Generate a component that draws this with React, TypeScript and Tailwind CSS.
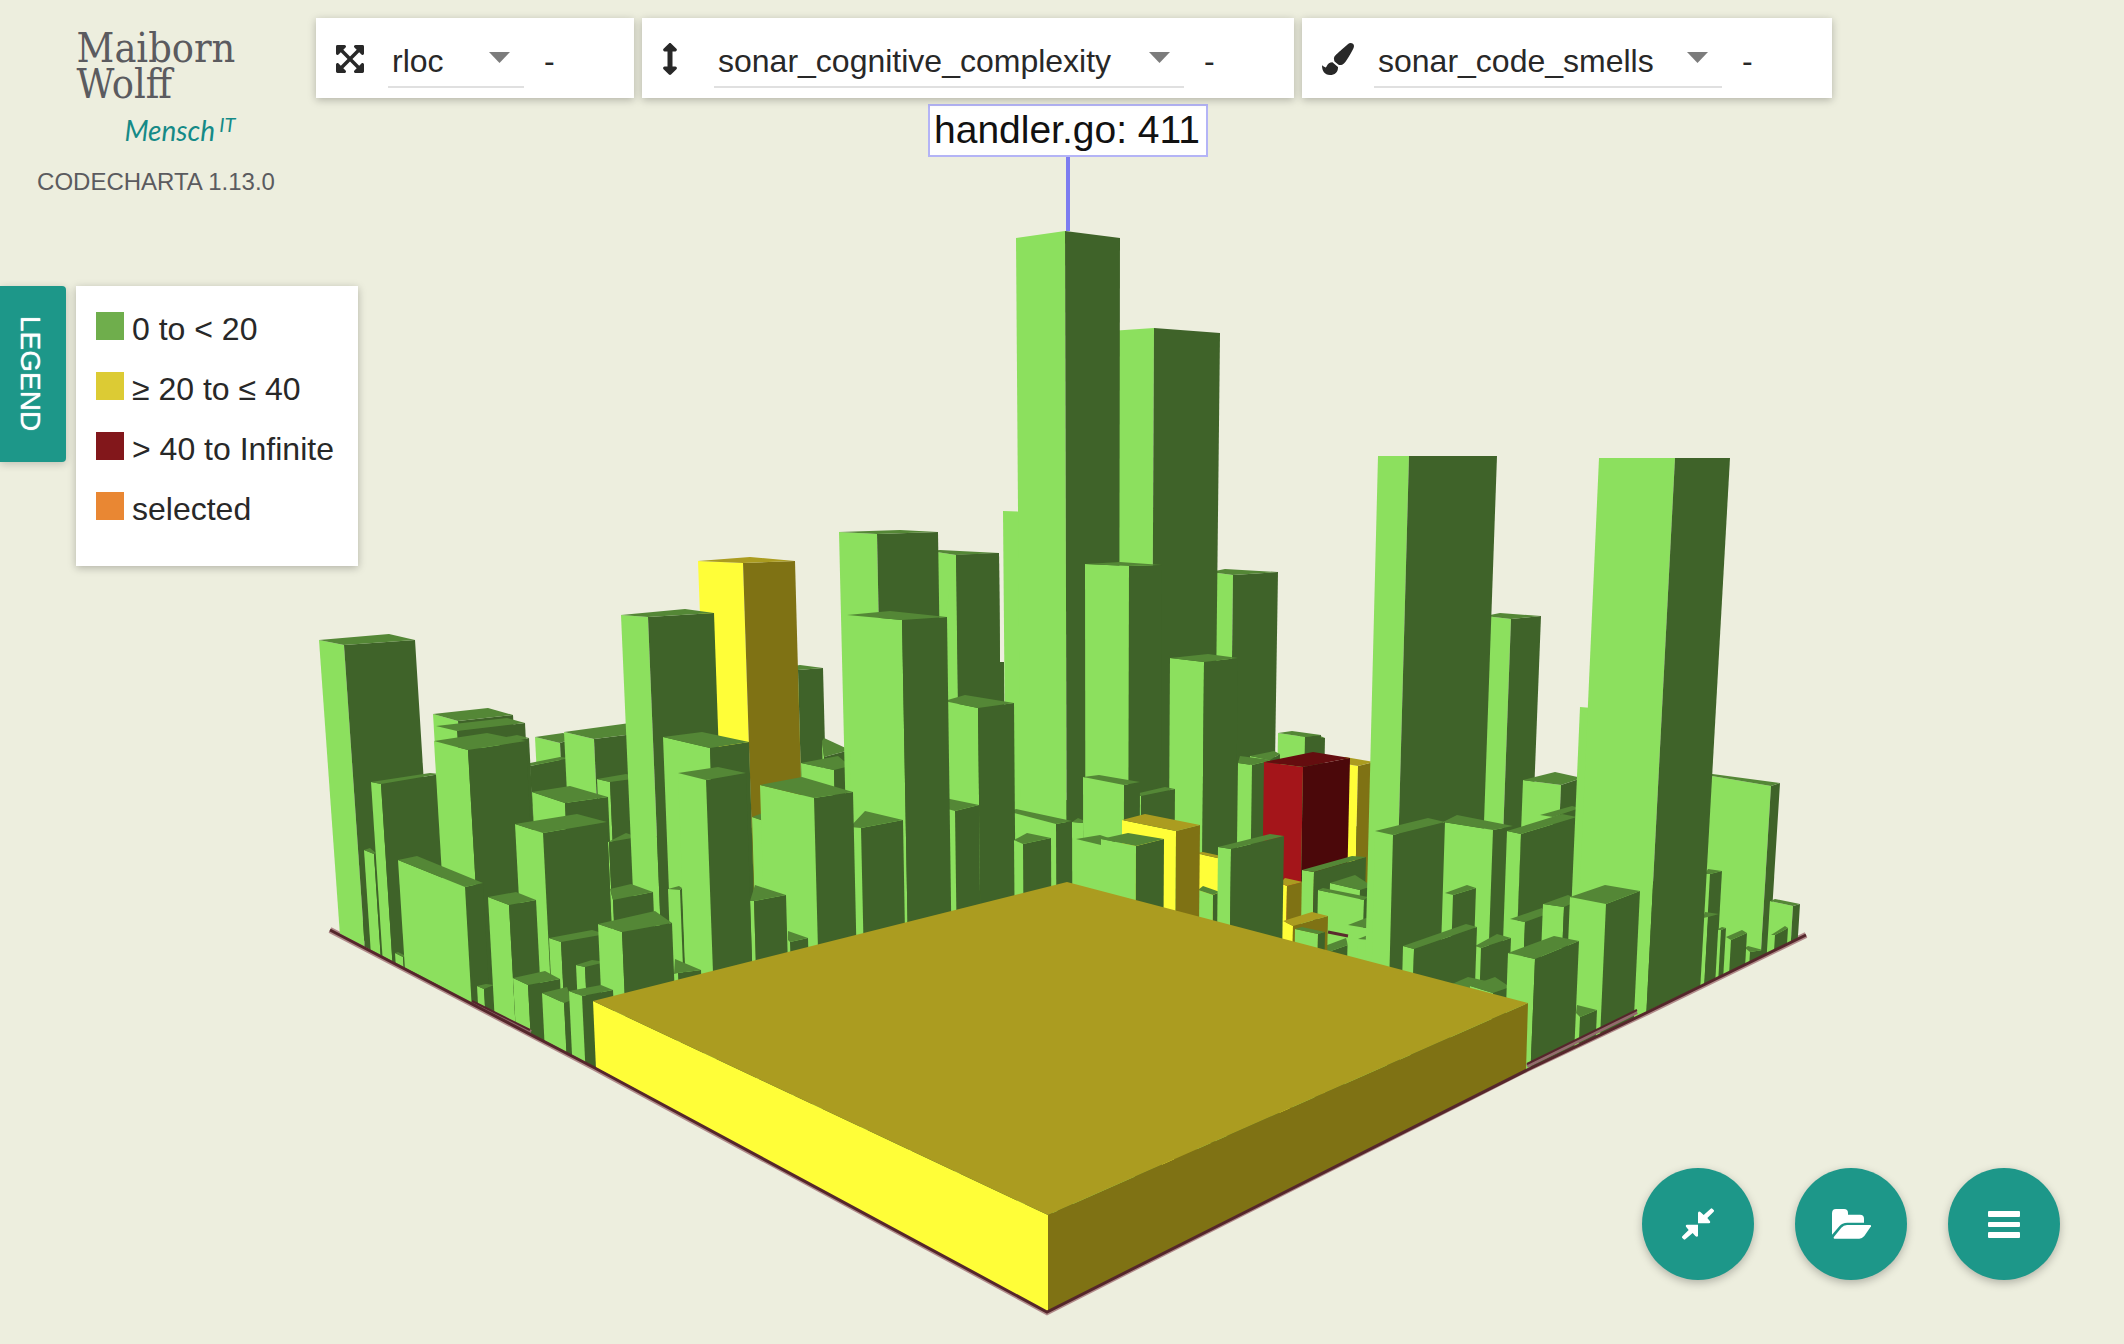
import type { ReactNode } from "react";
import { FaArrowsAltV, FaExpandArrowsAlt, FaPaintBrush } from "react-icons/fa";

type Palette = { left: string; right: string; top: string };

const GREEN: Palette = { left: "#8ce05e", right: "#3f6329", top: "#548736" };
const YELLOW: Palette = { left: "#fffe38", right: "#7f7214", top: "#ab9c20" };
const RED: Palette = { left: "#a4151a", right: "#4b080a", top: "#640d0f" };

/* Roof corners of a building: left, front, right and, where the roof is visible, back. */
type Building = { p: number[]; c?: Palette };

const g = (...p: number[]): Building => ({ p });
const y = (...p: number[]): Building => ({ p, c: YELLOW });
const r = (...p: number[]): Building => ({ p, c: RED });

/* Ordered from the back of the city to the front. */
const CITY: Building[] = [
  g(319, 640, 344, 645, 415, 640, 389, 634),
  g(535, 737, 560, 743, 575, 738, 563, 733),
  g(520, 765, 530, 766, 570, 758, 560, 757),
  g(564, 732, 594, 739, 650, 732, 630, 723),
  g(433, 714, 458, 721, 513, 715, 488, 708),
  g(436, 726, 457, 731, 525, 723, 507, 718),
  g(364, 850, 374, 854, 376, 853, 370, 848),
  g(371, 782, 381, 784, 440, 774, 430, 773),
  g(480, 742, 500, 745, 529, 738, 517, 735),
  g(434, 741, 468, 750, 526, 741, 487, 733),
  g(597, 779, 610, 782, 640, 778, 626, 774),
  g(532, 792, 565, 803, 608, 797, 570, 786),
  g(608, 842, 609, 842, 638, 837, 626, 833),

  g(780, 668, 798, 670, 823, 668, 800, 665),
  g(822, 741, 824, 757, 850, 750, 824, 738),
  y(698, 561, 743, 563, 795, 561, 750, 557),
  g(801, 763, 834, 770, 850, 766, 838, 756),
  g(752, 817, 790, 830, 800, 824, 765, 812),
  g(621, 615, 648, 617, 714, 613, 685, 609),
  g(930, 551, 956, 555, 999, 553, 940, 550),
  g(980, 662, 981, 662, 1004, 662),
  g(930, 700, 956, 555, 999, 553),
  g(839, 532, 877, 534, 938, 532, 900, 530),
  g(1003, 511, 1030, 512, 1040, 511),

  g(1210, 572, 1233, 575, 1278, 572, 1225, 569),
  g(1110, 331, 1154, 328, 1220, 333),
  g(1016, 238, 1065, 231, 1120, 238),
  g(1085, 564, 1129, 566, 1162, 565, 1120, 562),
  g(1170, 658, 1204, 662, 1238, 658, 1208, 654),
  g(1072, 822, 1083, 823, 1085, 821, 1078, 818),
  g(1135, 794, 1141, 796, 1175, 789, 1165, 787),
  g(1083, 777, 1124, 785, 1140, 782, 1099, 775),
  g(1010, 812, 1056, 824, 1072, 821, 1016, 809),
  g(944, 701, 978, 708, 1014, 703, 965, 695),
  g(1014, 840, 1023, 844, 1051, 838, 1027, 833),
  g(944, 808, 955, 811, 979, 805, 945, 798),
  g(847, 615, 902, 620, 947, 617, 890, 611),
  g(850, 827, 861, 828, 903, 820, 865, 811),
  g(663, 737, 710, 748, 749, 742, 702, 732),
  g(760, 785, 814, 798, 853, 792, 802, 777),
  g(750, 901, 754, 901, 786, 895, 755, 885),
  g(788, 940, 790, 942, 808, 938, 788, 931),
  g(668, 889, 680, 890, 682, 888, 679, 886),
  g(678, 773, 706, 780, 746, 773, 718, 767),

  g(610, 889, 613, 900, 653, 892, 631, 884),
  g(515, 824, 543, 833, 607, 822, 577, 814),
  g(549, 938, 561, 942, 606, 934, 592, 930),
  g(576, 965, 585, 967, 606, 962, 592, 960),
  g(674, 974, 678, 973, 701, 970, 675, 959),
  g(598, 924, 622, 932, 672, 923, 655, 911),
  g(395, 953, 403, 957, 406, 956, 398, 952),
  g(398, 860, 465, 887, 483, 883, 417, 856),
  g(477, 986, 484, 989, 494, 985, 486, 984),
  g(488, 897, 509, 905, 536, 900, 516, 892),
  g(513, 978, 528, 985, 560, 979, 545, 971),
  g(542, 993, 564, 1003, 572, 1000, 567, 987),
  g(569, 991, 582, 996, 613, 990, 601, 985),

  g(1076, 839, 1101, 845, 1115, 840, 1100, 835),
  y(1195, 853, 1222, 859, 1226, 857, 1203, 852),
  g(1198, 890, 1213, 895, 1220, 892, 1203, 886),
  y(1122, 820, 1176, 831, 1200, 825, 1145, 814),
  g(1101, 839, 1136, 846, 1164, 839, 1128, 833),

  g(1300, 735, 1310, 738, 1325, 738, 1318, 735),
  g(1278, 733, 1305, 737, 1321, 735, 1292, 731),
  g(1250, 756, 1270, 760, 1280, 754, 1274, 751),
  g(1238, 763, 1252, 765, 1272, 760, 1240, 756),
  y(1340, 763, 1358, 766, 1374, 762, 1345, 757),
  r(1264, 762, 1303, 767, 1350, 758, 1313, 752),
  y(1280, 883, 1287, 886, 1303, 882, 1285, 878),
  g(1302, 870, 1314, 872, 1366, 857, 1352, 856),
  g(1330, 883, 1360, 890, 1372, 886, 1355, 875),
  g(1318, 890, 1364, 900, 1368, 897, 1323, 888),
  g(1322, 947, 1328, 952, 1348, 945, 1346, 938),
  g(1348, 925, 1384, 931, 1390, 925, 1366, 918),
  g(1358, 939, 1384, 941, 1390, 938, 1368, 935),
  y(1283, 921, 1293, 926, 1328, 916, 1312, 912),
  g(1295, 929, 1318, 934, 1325, 932, 1302, 927),
  g(1218, 847, 1231, 849, 1284, 836, 1270, 834),

  g(1485, 616, 1511, 619, 1541, 616, 1500, 613),
  g(1378, 456, 1409, 456, 1497, 456),
  g(1523, 780, 1561, 785, 1582, 778, 1555, 772),
  g(1540, 815, 1553, 817, 1580, 808, 1572, 806),
  g(1443, 822, 1493, 830, 1513, 826, 1457, 815),
  g(1375, 831, 1393, 835, 1445, 822, 1428, 818),
  g(1507, 831, 1521, 834, 1577, 817, 1562, 814),
  g(1445, 893, 1453, 895, 1476, 888, 1467, 885),
  g(1510, 919, 1525, 922, 1547, 914, 1542, 908),
  g(1543, 904, 1564, 907, 1580, 900, 1568, 895),
  g(1475, 946, 1481, 948, 1511, 938, 1497, 934),
  g(1403, 946, 1414, 949, 1477, 927, 1466, 924),
  g(1452, 984, 1475, 990, 1500, 984, 1468, 977),
  g(1470, 986, 1493, 993, 1510, 987, 1495, 977),

  g(1700, 774, 1771, 786, 1780, 783, 1705, 773),
  g(1770, 901, 1793, 906, 1800, 904, 1775, 899),
  g(1771, 935, 1775, 935, 1788, 928, 1785, 926),
  g(1745, 948, 1750, 952, 1763, 950, 1748, 946),
  g(1705, 874, 1710, 874, 1722, 871, 1708, 869),
  g(1726, 937, 1731, 940, 1747, 933, 1742, 930),
  g(1716, 930, 1721, 930, 1726, 928, 1722, 927),
  g(1703, 918, 1708, 917, 1719, 914, 1705, 912),
  g(1580, 707, 1592, 708, 1600, 707),
  g(1599, 458, 1675, 458, 1730, 458),
  g(1570, 897, 1606, 904, 1640, 891, 1605, 885),
  g(1576, 1013, 1580, 1017, 1597, 1010, 1577, 1005),
  g(1508, 953, 1535, 959, 1579, 941, 1554, 936),
];

const GROUND = 1330;

/* Vertical edges lean towards a vanishing point far below the city. */
const foot = (px: number, py: number) =>
  `${Math.round(px + ((1100 - px) * (GROUND - py)) / 11100)},${GROUND}`;

function Block({ p, c = GREEN }: Building) {
  const [lx, ly, fx, fy, rx, ry, bx, by] = p;
  return (
    <g>
      <polygon fill={c.left} points={`${lx},${ly} ${fx},${fy} ${foot(fx, fy)} ${foot(lx, ly)}`} />
      <polygon fill={c.right} points={`${fx},${fy} ${rx},${ry} ${foot(rx, ry)} ${foot(fx, fy)}`} />
      {bx !== undefined && (
        <polygon fill={c.top} points={`${lx},${ly} ${bx},${by} ${rx},${ry} ${fx},${fy}`} />
      )}
    </g>
  );
}

function CityMap() {
  return (
    <svg
      className="absolute inset-0 h-full w-full"
      viewBox="0 0 2124 1344"
      role="img"
      aria-label="Code city, tallest building handler.go"
    >
      <clipPath id="plate">
        <polygon points="0,0 2124,0 2124,900 1807,934 1648,1011 1527,1069 1047,1312 593,1066 329,928 0,900" />
      </clipPath>
      <polyline
        points="330,930 593,1067 1047,1312 1527,1069 1648,1012 1806,935"
        fill="none"
        stroke="#b08a8a"
        strokeWidth="6"
      />
      <g clipPath="url(#plate)">
        <polygon fill="#3f6329" points="345,930 500,850 1066,800 1620,850 1700,925 1650,1010 1047,1312 593,1066" />
        {CITY.map((b, i) => (
          <Block key={i} {...b} />
        ))}
        <polygon fill={YELLOW.left} points="593,1001 1048,1215 1048,1312 596,1069" />
        <polygon fill={YELLOW.right} points="1048,1215 1528,1003 1526,1070 1048,1312" />
        <polygon fill={YELLOW.top} points="593,1001 1067,882 1528,1003 1048,1215" />
        <path d="M1328 932l20 4" stroke="#5a2a2e" strokeWidth="3" />
      </g>
      <path d="M472 1003l59 29M1527 1066l110-54" fill="none" stroke="#936b6d" strokeWidth="4" />
      <path d="M472 1001l58 29M1527 1064l110-54" fill="none" stroke="#55262b" strokeWidth="2" />
      <polyline
        points="330,930 593,1067 1047,1312 1527,1070 1648,1012 1806,935"
        fill="none"
        stroke="#55262b"
        strokeWidth="3"
      />
      <path d="M1068 156v75" stroke="#7c7cf0" strokeWidth="4" />
      <rect x="929" y="105" width="278" height="51" fill="#fff" stroke="#b4b4f6" strokeWidth="2" />
      <text x="934" y="143" fontSize="39" fill="#111" fontFamily="Liberation Sans, Arial, sans-serif">
        handler.go: 411
      </text>
    </svg>
  );
}

function MetricCard({
  icon,
  label,
  metric,
  width,
}: {
  icon: ReactNode;
  label: string;
  metric: string;
  width: string;
}) {
  return (
    <div className="flex h-20 items-end bg-white pb-[10px] pl-5 shadow-[0_2px_8px_rgba(0,0,0,0.25)]">
      <span className="flex h-[52px] w-[52px] items-center pb-1.5 text-[32px]">{icon}</span>
      <span className="relative flex">
        <select
          aria-label={label}
          defaultValue={metric}
          className={`h-[52px] appearance-none rounded-none border-b-2 border-[#e0e0e0] bg-transparent pl-[4px] pr-16 text-[32px] leading-[50px] outline-none ${width}`}
        >
          <option>{metric}</option>
        </select>
        <svg className="pointer-events-none absolute right-[14px] top-4 h-[11px] w-[21px]" viewBox="0 0 21 11" aria-hidden="true">
          <path d="M0 0h21L10.500 11z" fill="#7c7c7c" />
        </svg>
      </span>
      <span className="h-[52px] w-[110px] pl-5 text-[32px] leading-[50px]">-</span>
    </div>
  );
}

const LEGEND = [
  { text: "0 to < 20", swatch: "bg-[#6fae4c]" },
  { text: "≥ 20 to ≤ 40", swatch: "bg-[#dccb34]" },
  { text: "> 40 to Infinite", swatch: "bg-[#82171b]" },
  { text: "selected", swatch: "bg-[#e98733]" },
];

function RoundButton({ label, children }: { label: string; children: ReactNode }) {
  return (
    <button
      type="button"
      aria-label={label}
      className="flex size-28 items-center justify-center rounded-full bg-[#1d9789] text-white shadow-[0_3px_8px_rgba(0,0,0,0.25)]"
    >
      {children}
    </button>
  );
}

export default function App() {
  return (
    <div className="relative flex min-h-screen flex-col bg-[#edeede] font-['Liberation_Sans',Arial,sans-serif] text-[#282828]">
      <CityMap />

      <header className="relative flex items-start">
        <div className="flex w-[316px] shrink-0 flex-col items-center pr-1 pt-[30px] text-[#5b5b5f]">
          <div className="flex flex-col">
            <span className="font-['DejaVu_Serif_Condensed','Liberation_Serif',serif] text-[41px] leading-9">
              Maiborn
              <br />
              Wolff
            </span>
            <span className="mt-2 flex items-start self-end font-['Lato',sans-serif] italic text-[#158a87]">
              <span className="text-[28px] leading-10">Mensch</span>
              <span className="pl-1 text-xl leading-7">IT</span>
            </span>
          </div>
          <span className="mt-3.5 text-2xl leading-9">CODECHARTA 1.13.0</span>
        </div>
        <div className="flex gap-2 pt-[18px]">
          <MetricCard
            icon={<FaExpandArrowsAlt className="w-7" />}
            label="Area metric"
            metric="rloc"
            width="min-w-[136px]"
          />
          <MetricCard
            icon={<FaArrowsAltV className="w-4" />}
            label="Height metric"
            metric="sonar_cognitive_complexity"
            width="min-w-[470px]"
          />
          <MetricCard
            icon={<FaPaintBrush />}
            label="Color metric"
            metric="sonar_code_smells"
            width="min-w-[348px]"
          />
        </div>
      </header>

      <section className="relative mt-[86px] flex items-start gap-[10px]">
        <button
          type="button"
          className="flex h-44 w-[66px] items-center justify-center rounded-r bg-[#1d9789] pr-1.5 text-[28px] text-white shadow-[0_2px_8px_rgba(0,0,0,0.2)] [text-shadow:0_0_1px_#fff] [writing-mode:vertical-rl]"
        >
          LEGEND
        </button>
        <ul className="bg-white pb-[14px] pl-5 pr-6 pt-[26px] shadow-[0_2px_8px_rgba(0,0,0,0.25)]">
          {LEGEND.map(({ text, swatch }) => (
            <li key={text} className="flex h-[60px] items-start gap-2 text-[32px] leading-[34px]">
              <span className={`size-7 ${swatch}`} />
              {text}
            </li>
          ))}
        </ul>
      </section>

      <nav className="relative mt-auto flex gap-[41px] self-end p-16" aria-label="Map actions">
        <RoundButton label="Fit map to view">
          <svg className="size-8" viewBox="0 0 96 96" fill="currentColor" aria-hidden="true">
            <path d="M86 2q3-2 5 0l4 4q2 2 0 5L76 30l8 10q2 6-3 6H48V14q3-6 8-1l9 8z" />
            <path d="M10 94q-3 2-5 0l-4-4q-2-2 0-5l19-19-8-10q-2-6 3-6h33v34q-3 5-8 0l-8-9z" />
          </svg>
        </RoundButton>
        <RoundButton label="Open file">
          <svg className="h-[30px] w-[39px]" viewBox="0 0 117 90" fill="currentColor" aria-hidden="true">
            <path d="M0 77V13Q0 0 12 0h24q12 0 12 12v5h36q12 0 12 12v12H46Q30 41 22 52z" />
            <path d="M7 89q-4-1-1-6l22-27q7-8 17-8h70q3 1 2 4L97 81q-7 8-15 8z" />
          </svg>
        </RoundButton>
        <RoundButton label="Menu">
          <svg className="h-[27px] w-8" viewBox="0 0 32 27" fill="currentColor" aria-hidden="true">
            <rect width="32" height="6" rx="1" />
            <rect y="11" width="32" height="5" rx="1" />
            <rect y="21" width="32" height="6" rx="1" />
          </svg>
        </RoundButton>
      </nav>
    </div>
  );
}
